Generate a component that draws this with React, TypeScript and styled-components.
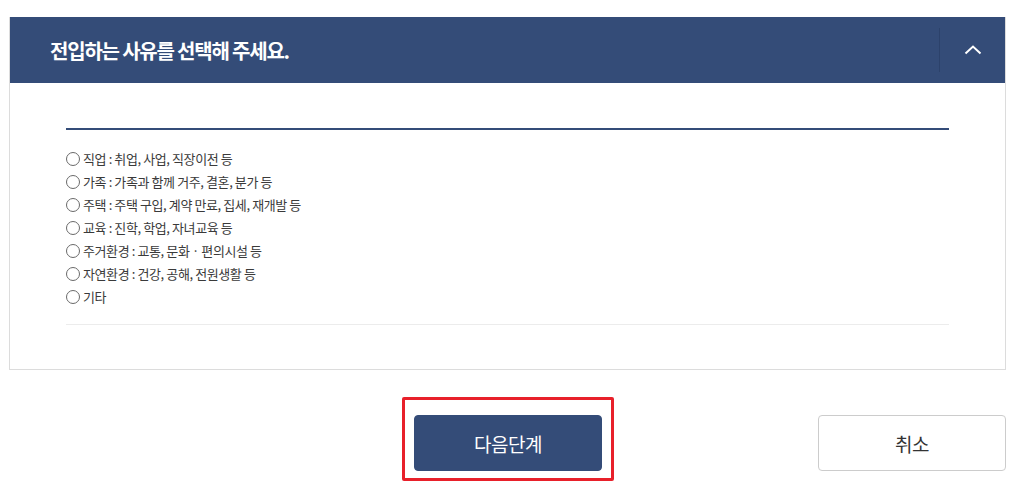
import React from "react";
import styled, { createGlobalStyle } from "styled-components";

const Global = createGlobalStyle`
  html, body { margin: 0; padding: 0; background: #ffffff; }
  body { font-family: "Noto Sans CJK KR", "Noto Sans", sans-serif; }
  * { box-sizing: border-box; }
`;

const Page = styled.div`
  width: 1024px;
  min-height: 484px;
  padding: 17px 18px 14px 9px;
`;

const Panel = styled.section`
  border: 1px solid #dcdcdc;
  border-top: none;
`;

const Header = styled.header`
  height: 66px;
  background: #344c78;
  display: flex;
  align-items: center;
  padding-left: 40px;
`;

const Title = styled.h2`
  flex: 1;
  margin: 0;
  color: #ffffff;
  font-size: 20px;
  font-weight: 700;
  letter-spacing: -1.2px;
`;

const Toggle = styled.button`
  width: 66px;
  height: 44px;
  border: none;
  border-left: 1px solid #2c426b;
  background: transparent;
  display: flex;
  align-items: center;
  justify-content: center;
  padding: 0;
  cursor: pointer;
`;

const Body = styled.div`
  padding: 45px 56px 44px 56px;
`;

const TopRule = styled.div`
  height: 2px;
  background: #344c78;
`;

const List = styled.ul`
  list-style: none;
  margin: 0;
  padding: 17px 0 16px;
  border-bottom: 1px solid #ececec;
`;

const Item = styled.li`
  height: 23px;
  display: flex;
  align-items: center;
  gap: 3px;
  font-size: 13px;
  color: #3a3a3a;
  letter-spacing: -0.4px;
`;

const Radio = styled.span`
  width: 14px;
  height: 14px;
  border: 1.3px solid #6a6a6a;
  border-radius: 50%;
  flex: none;
`;

const Actions = styled.div`
  display: grid;
  grid-template-columns: 1fr auto 1fr;
  align-items: center;
  margin-top: 45px;
  padding-left: 1px;
`;

const Highlight = styled.div`
  position: relative;
  grid-column: 2;
`;

const Marker = styled.span`
  position: absolute;
  left: -12px;
  right: -12px;
  top: -18px;
  bottom: -10px;
  border: 3px solid #e8202a;
  border-radius: 2px;
  pointer-events: none;
`;

const Button = styled.button<{ $primary?: boolean }>`
  width: 188px;
  height: 56px;
  border-radius: 4px;
  font-family: "Noto Sans CJK KR", "Noto Sans", sans-serif;
  font-size: 19px;
  letter-spacing: -0.5px;
  cursor: pointer;
  border: 1px solid ${(p) => (p.$primary ? "#344c78" : "#cccccc")};
  background: ${(p) => (p.$primary ? "#344c78" : "#ffffff")};
  color: ${(p) => (p.$primary ? "#ffffff" : "#333333")};
`;

const Right = styled.div`
  grid-column: 3;
  justify-self: end;
`;

const items = [
  "직업 : 취업, 사업, 직장이전 등",
  "가족 : 가족과 함께 거주, 결혼, 분가 등",
  "주택 : 주택 구입, 계약 만료, 집세, 재개발 등",
  "교육 : 진학, 학업, 자녀교육 등",
  "주거환경 : 교통, 문화 · 편의시설 등",
  "자연환경 : 건강, 공해, 전원생활 등",
  "기타",
];

export default function App() {
  return (
    <Page>
      <Global />
      <Panel>
        <Header>
          <Title>전입하는 사유를 선택해 주세요.</Title>
          <Toggle aria-label="접기">
            <svg width="18" height="10" viewBox="0 0 18 10">
              <polyline
                points="1.5,8.5 9,1.5 16.5,8.5"
                fill="none"
                stroke="#ffffff"
                strokeWidth="2"
              />
            </svg>
          </Toggle>
        </Header>
        <Body>
          <TopRule />
          <List>
            {items.map((t) => (
              <Item key={t}>
                <Radio />
                {t}
              </Item>
            ))}
          </List>
        </Body>
      </Panel>
      <Actions>
        <Highlight>
          <Button $primary>다음단계</Button>
          <Marker />
        </Highlight>
        <Right>
          <Button>취소</Button>
        </Right>
      </Actions>
    </Page>
  );
}
